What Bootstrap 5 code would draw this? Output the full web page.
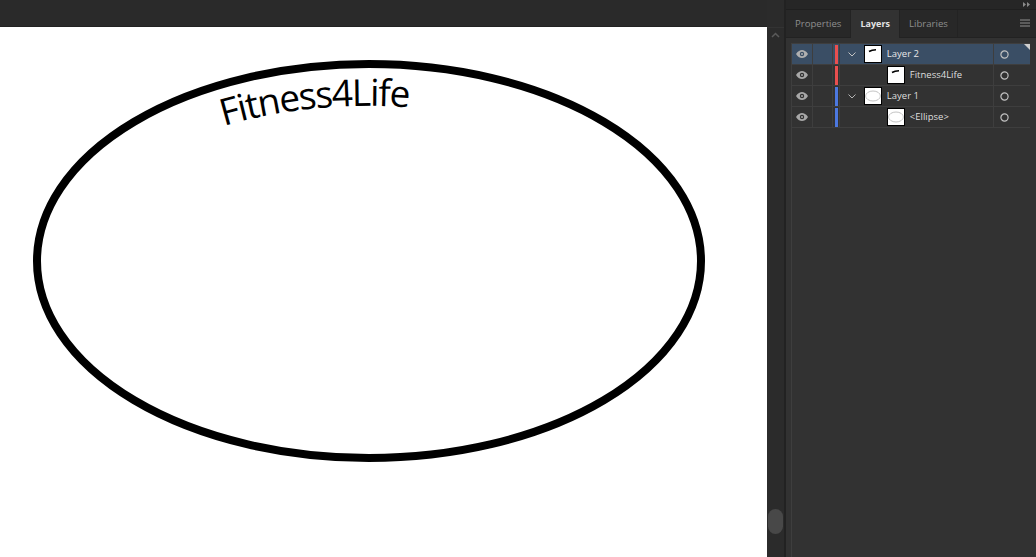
<!DOCTYPE html>
<html lang="en">
<head>
<meta charset="utf-8">
<title>Layers</title>
<link rel="stylesheet" href="https://cdn.jsdelivr.net/npm/bootstrap@5.3.0/dist/css/bootstrap.min.css">
<style>
html,body{height:100%;margin:0;overflow:hidden;background:#fff}
.app-shell{width:1036px;height:557px;font-family:"Open Sans",sans-serif}
.doc-col{width:767px}
.top-strip{height:27px;background:#2a2a2a;border-bottom:1px solid #222}
.art-board{display:block;width:767px;height:530px;background:#fff}
.art-text{font-family:"Open Sans",sans-serif;font-size:37px;font-weight:500;letter-spacing:-1.45px;fill:#000}
.scroll-col{width:19px;background:#2b2b2b;border-right:2px solid #222;padding-top:27px}
.scroll-head{height:17px;border-top:1px solid #333}
.scroll-thumb{width:15px;height:25px;margin-left:1px;margin-bottom:23px;background:#484848;border-radius:8px}
.panel-col{width:250px;background:#323232}
.dock-strip{height:10px;background:#262626;border-bottom:1px solid #1f1f1f;padding-right:6px}
.tab-row{height:28px;background:#282828;border-bottom:1px solid #222}
.tab-item{height:27px;padding:0 9px;font-size:9.600px;font-weight:500;color:#8e8e8e;line-height:27px;border-right:1px solid #232323}
.tab-item.is-on{background:#323232;color:#e4e4e4;height:28px;font-size:9px;font-weight:700}
.tab-menu{margin-right:6px;width:10px;margin-top:9px}
.layer-list{margin:5px 6px 0 5px;border-left:1px solid #3e3e3e;border-top:1px solid #3e3e3e}
.layer-row{height:21px;border-bottom:1px solid #3e3e3e;color:#dedede;font-size:9.500px;font-weight:500}
.layer-row.is-sel{background:#3a4e65;color:#e8e8e8}
.cell-eye{width:21px;border-right:1px solid #3e3e3e}
.cell-blank{width:20px;border-right:1px solid #3e3e3e}
.cell-color{width:7px;padding-left:2px;border-right:1px solid #3e3e3e}
.color-bar{display:block;width:3px;height:19px}
.bar-red{background:#e94f4f}
.bar-blue{background:#4c78e0}
.cell-tree{width:155px;border-right:1px solid #3e3e3e}
.cell-target{width:36px;position:relative;padding-left:6px}
.caret-box{width:24px}
.caret-space{width:47px}
.thumb-box{display:block;width:18px;height:18px;background:#fff;border:1px solid #000;flex:none;margin-right:5px}
.corner-mark{position:absolute;top:0;right:0;width:0;height:0;border-top:6px solid #cfcfcf;border-left:6px solid transparent}
</style>
</head>
<body>
<div class="app-shell d-flex">
  <div class="doc-col d-flex flex-column">
    <div class="top-strip"></div>
    <svg class="art-board" viewBox="0 27 767 530" role="img" aria-label="Ellipse with text on a path">
      <defs><path id="curve" d="M 224,126 A 294 155.3 0 0 1 520,128"/></defs>
      <ellipse cx="369" cy="261" rx="332" ry="197" fill="none" stroke="#000" stroke-width="8"/>
      <text class="art-text"><textPath href="#curve">Fitness4Life</textPath></text>
    </svg>
  </div>
  <div class="scroll-col d-flex flex-column justify-content-between">
    <div class="scroll-head d-flex justify-content-center pt-1">
      <svg width="9" height="6" viewBox="0 0 9 6"><path d="M1 5 4.500 1.500 8 5" fill="none" stroke="#5a5a5a" stroke-width="1.500"/></svg>
    </div>
    <div class="scroll-thumb"></div>
  </div>
  <div class="panel-col d-flex flex-column">
    <div class="dock-strip d-flex justify-content-end align-items-center">
      <svg width="7" height="5" viewBox="0 0 7 5"><path d="M0 0 3 2.500 0 5ZM4 0 7 2.500 4 5Z" fill="#8a8a8a"/></svg>
    </div>
    <div class="tab-row d-flex align-items-start">
      <div class="tab-item">Properties</div>
      <div class="tab-item is-on">Layers</div>
      <div class="tab-item">Libraries</div>
      <div class="tab-menu ms-auto d-flex">
        <svg width="10" height="8" viewBox="0 0 10 8"><path d="M0 1H10M0 4H10M0 7H10" stroke="#8f8f8f"/></svg>
      </div>
    </div>
    <div class="layer-list flex-grow-1">
      <div class="layer-row is-sel d-flex align-items-stretch">
        <div class="cell-eye d-flex align-items-center justify-content-center"><svg width="12" height="8" viewBox="0 0 12 8"><path d="M0 4C2 1 4 0 6 0s4 1 6 4c-2 3-4 4-6 4S2 7 0 4Z" fill="#b0b0b0"/><circle cx="6" cy="4" r="2.200" fill="#3a4e65"/><circle cx="6" cy="4" r="1" fill="#b0b0b0"/></svg></div>
        <div class="cell-blank"></div>
        <div class="cell-color d-flex align-items-center"><span class="color-bar bar-red"></span></div>
        <div class="cell-tree d-flex align-items-center">
          <div class="caret-box d-flex justify-content-center"><svg width="8" height="5" viewBox="0 0 8 5"><path d="M.5.500 4 4 7.500.500" fill="none" stroke="#c4c4c4"/></svg></div>
          <svg class="thumb-box" viewBox="0 0 16 16"><path d="M4 5.500C6 4.300 8 3.800 11 3.800" fill="none" stroke="#000" stroke-width="1.600"/></svg>
          <span>Layer 2</span>
        </div>
        <div class="cell-target d-flex align-items-center"><svg width="9" height="9" viewBox="0 0 9 9"><circle cx="4.500" cy="4.500" r="3.600" fill="none" stroke="#c2c2c2" stroke-width="1.200"/></svg><span class="corner-mark"></span></div>
      </div>
      <div class="layer-row d-flex align-items-stretch">
        <div class="cell-eye d-flex align-items-center justify-content-center"><svg width="12" height="8" viewBox="0 0 12 8"><path d="M0 4C2 1 4 0 6 0s4 1 6 4c-2 3-4 4-6 4S2 7 0 4Z" fill="#a8a8a8"/><circle cx="6" cy="4" r="2.200" fill="#323232"/><circle cx="6" cy="4" r="1" fill="#a8a8a8"/></svg></div>
        <div class="cell-blank"></div>
        <div class="cell-color d-flex align-items-center"><span class="color-bar bar-red"></span></div>
        <div class="cell-tree d-flex align-items-center">
          <div class="caret-space"></div>
          <svg class="thumb-box" viewBox="0 0 16 16"><path d="M4 5.500C6 4.300 8 3.800 11 3.800" fill="none" stroke="#000" stroke-width="1.600"/></svg>
          <span>Fitness4Life</span>
        </div>
        <div class="cell-target d-flex align-items-center"><svg width="9" height="9" viewBox="0 0 9 9"><circle cx="4.500" cy="4.500" r="3.600" fill="none" stroke="#c2c2c2" stroke-width="1.200"/></svg></div>
      </div>
      <div class="layer-row d-flex align-items-stretch">
        <div class="cell-eye d-flex align-items-center justify-content-center"><svg width="12" height="8" viewBox="0 0 12 8"><path d="M0 4C2 1 4 0 6 0s4 1 6 4c-2 3-4 4-6 4S2 7 0 4Z" fill="#a8a8a8"/><circle cx="6" cy="4" r="2.200" fill="#323232"/><circle cx="6" cy="4" r="1" fill="#a8a8a8"/></svg></div>
        <div class="cell-blank"></div>
        <div class="cell-color d-flex align-items-center"><span class="color-bar bar-blue"></span></div>
        <div class="cell-tree d-flex align-items-center">
          <div class="caret-box d-flex justify-content-center"><svg width="8" height="5" viewBox="0 0 8 5"><path d="M.5.500 4 4 7.500.500" fill="none" stroke="#b4b4b4"/></svg></div>
          <svg class="thumb-box" viewBox="0 0 16 16"><ellipse cx="8" cy="8" rx="7.400" ry="5" fill="none" stroke="#c4c4c4"/></svg>
          <span>Layer 1</span>
        </div>
        <div class="cell-target d-flex align-items-center"><svg width="9" height="9" viewBox="0 0 9 9"><circle cx="4.500" cy="4.500" r="3.600" fill="none" stroke="#c2c2c2" stroke-width="1.200"/></svg></div>
      </div>
      <div class="layer-row d-flex align-items-stretch">
        <div class="cell-eye d-flex align-items-center justify-content-center"><svg width="12" height="8" viewBox="0 0 12 8"><path d="M0 4C2 1 4 0 6 0s4 1 6 4c-2 3-4 4-6 4S2 7 0 4Z" fill="#a8a8a8"/><circle cx="6" cy="4" r="2.200" fill="#323232"/><circle cx="6" cy="4" r="1" fill="#a8a8a8"/></svg></div>
        <div class="cell-blank"></div>
        <div class="cell-color d-flex align-items-center"><span class="color-bar bar-blue"></span></div>
        <div class="cell-tree d-flex align-items-center">
          <div class="caret-space"></div>
          <svg class="thumb-box" viewBox="0 0 16 16"><ellipse cx="8" cy="8" rx="7.400" ry="5" fill="none" stroke="#c4c4c4"/></svg>
          <span>&lt;Ellipse&gt;</span>
        </div>
        <div class="cell-target d-flex align-items-center"><svg width="9" height="9" viewBox="0 0 9 9"><circle cx="4.500" cy="4.500" r="3.600" fill="none" stroke="#c2c2c2" stroke-width="1.200"/></svg></div>
      </div>
    </div>
  </div>
</div>
<script src="https://cdn.jsdelivr.net/npm/bootstrap@5.3.0/dist/js/bootstrap.bundle.min.js"></script>
</body>
</html>
